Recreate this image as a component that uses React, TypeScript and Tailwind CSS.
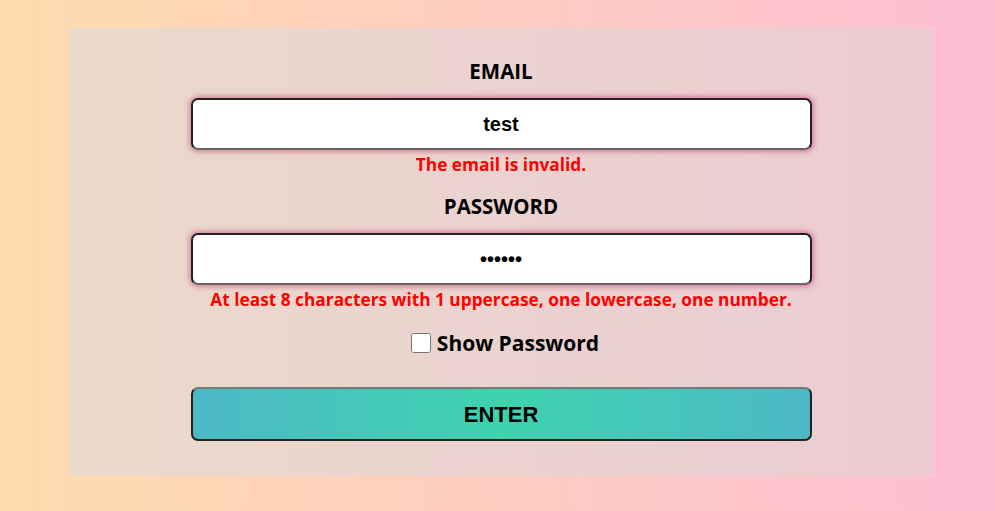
import React, { useState } from 'react';

const App: React.FC = () => {
  const [email, setEmail] = useState('test');
  const [password, setPassword] = useState('123456');
  const [show, setShow] = useState(false);

  const inputClass =
    "w-full h-[52px] rounded-[7px] border-2 border-[#222] border-b-[#666] bg-white text-center text-[20px] font-semibold text-black outline-none shadow-[0_0_5px_2px_rgba(200,50,100,0.5)] [font-family:'Liberation_Sans',Arial,sans-serif]";

  return (
    <div className="w-[995px] h-[511px] bg-gradient-to-r from-[#fedcad] to-[#fdbdd3] py-[28px] [font-family:'Open_Sans',sans-serif]">
      <div className="ml-[69px] w-[864px] h-[448px] bg-gradient-to-r from-[#eadacb] to-[#ebcbd3] flex flex-col items-center pt-[29px]">
        <label className="text-[20.5px] font-bold text-black leading-[28px]">EMAIL</label>
        <div className="w-[621px] mt-[13px]">
          <input value={email} onChange={(e) => setEmail(e.target.value)} className={inputClass} />
        </div>
        <p className="mt-[3px] text-[17.3px] font-bold text-[#ff0000] leading-[24px]">The email is invalid.</p>
        <label className="mt-[15px] text-[20.5px] font-bold text-black leading-[28px]">PASSWORD</label>
        <div className="w-[621px] mt-[13px]">
          <input
            type={show ? 'text' : 'password'}
            value={password}
            onChange={(e) => setPassword(e.target.value)}
            className={inputClass}
          />
        </div>
        <p className="mt-[3px] text-[17.3px] font-bold text-[#ff0000] leading-[24px]">
          At least 8 characters with 1 uppercase, one lowercase, one number.
        </p>
        <label className="mt-[17px] ml-[8px] flex items-center gap-[6px] text-[21px] font-bold text-black leading-[28px]">
          <input
            type="checkbox"
            checked={show}
            onChange={(e) => setShow(e.target.checked)}
            className="w-[20px] h-[20px] m-0"
          />
          Show Password
        </label>
        <button
          type="button"
          className="mt-[30px] w-[621px] h-[54px] shrink-0 rounded-[7px] border-2 border-[#222] border-t-[#777] bg-gradient-to-r from-[#4db8c6] via-[#3dd3ae] to-[#4db8c6] text-[22px] font-semibold text-black [font-family:'Liberation_Sans',Arial,sans-serif]"
        >
          ENTER
        </button>
      </div>
    </div>
  );
};

export default App;
